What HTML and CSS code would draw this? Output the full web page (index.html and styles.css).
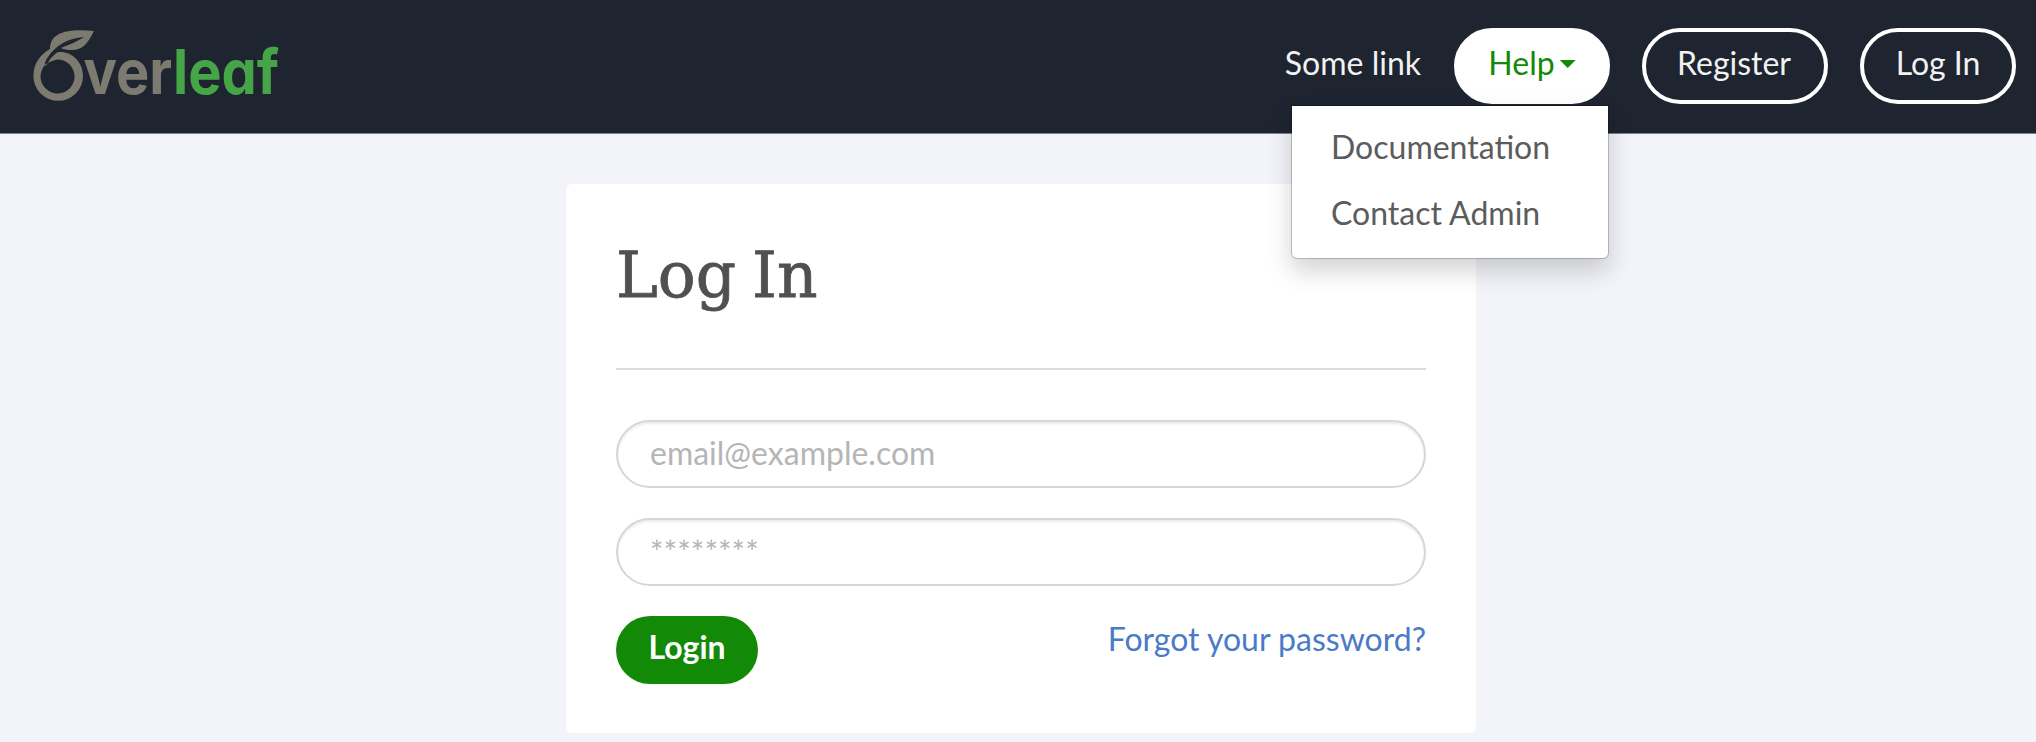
FILE: index.html
```html
<!DOCTYPE html>
<html lang="en">
<head>
<meta charset="utf-8">
<title>Overleaf - Log In</title>
<link rel="stylesheet" href="styles.css">
</head>
<body>
<header class="navbar">
  <a class="brand" aria-label="Overleaf">
    <svg class="logo" width="256" height="88" viewBox="30 26 256 88">
      <path fill="#7d7b70" d="M50 49C50 34 64 28 94 31C88 43 83 50 72 50Q65 50 61 48C69 45 78 41 84 37C68 38 55 46 48 57Q43 64 46 66Q51 56 58 52C72 51 83 62 83 76A24.8 24.8 0 1 1 33.4 76C33.4 63 41 54 50 49ZM58.2 59.5Q54 59.5 46 64A17 17 0 1 0 58.2 59.5Z" fill-rule="evenodd"/>
      <text class="wordmark" x="83.5" y="93.5" fill="#7d7b70" textLength="195.5" lengthAdjust="spacingAndGlyphs">ver<tspan fill="#46a546">leaf</tspan></text>
    </svg>
  </a>
  <nav class="nav">
    <a class="link">Some link</a>
    <div class="dropdown">
      <a class="pill pill-open">Help<span class="caret"></span></a>
      <div class="menu">
        <a class="item">Documentation</a>
        <a class="item">Contact Admin</a>
      </div>
    </div>
    <a class="pill pill-register">Register</a>
    <a class="pill">Log In</a>
  </nav>
</header>
<main class="card">
  <h1 class="title">Log In</h1>
  <form class="form">
    <input class="field" type="email" placeholder="email@example.com">
    <input class="field field-password" type="password" placeholder="********">
    <div class="actions">
      <button class="submit" type="button">Login</button>
      <a class="forgot">Forgot your password?</a>
    </div>
  </form>
</main>
</body>
</html>
```
FILE: styles.css
```css
* { box-sizing: border-box; }
body {
  margin: 0;
  height: 742px;
  overflow: hidden;
  background: #f3f4f9;
  color: #5c5c5c;
  font: 32px/50px Lato, sans-serif;
}
.navbar {
  display: flex;
  justify-content: space-between;
  height: 134px;
  padding: 26px 20px 0 30px;
  background: #1e2430;
  border-bottom: 1px solid #7c8088;
}
.logo { display: block; }
.wordmark {
  font: 700 62px Inter, sans-serif;
  font-feature-settings: "cv11";
}
.nav {
  display: flex;
  align-items: flex-start;
  gap: 32px;
  padding-top: 2px;
}
.link {
  padding: 10px 1px 0 0;
  color: #f2f2f2;
}
.pill {
  display: flex;
  justify-content: center;
  width: 156px;
  height: 76px;
  padding-top: 6px;
  border: 4px solid #fff;
  border-radius: 38px;
  color: #f2f2f2;
}
.pill-register {
  width: 186px;
  padding-right: 2px;
}
.pill-open {
  background: #fff;
  color: #138a07;
}
.caret {
  margin: 22px 0 0 5px;
  width: 16px;
  height: 8px;
  background: #138a07;
  clip-path: polygon(0 0, 100% 0, 50% 100%);
}
.dropdown { position: relative; }
.menu {
  position: absolute;
  z-index: 2;
  top: 77px;
  right: 1px;
  width: 318px;
  height: 154px;
  padding: 8px 39px 0;
  background: #fff;
  background-clip: padding-box;
  border: 1px solid rgba(0, 0, 0, .2);
  border-radius: 0 0 6px 6px;
  box-shadow: 0 12px 24px rgba(0, 0, 0, .175);
}
.item {
  display: block;
  height: 66px;
  line-height: 66px;
}
.card {
  width: 910px;
  height: 549px;
  margin: 50px 0 0 566px;
  padding: 50px;
  background: #fff;
  border-radius: 6px;
}
.title {
  height: 136px;
  margin: 0 0 50px;
  border-bottom: 2px solid #dbdbdb;
  color: #505050;
  font: 400 63px/84px "DejaVu Serif", serif;
  word-spacing: -4px;
  -webkit-text-stroke: 0.8px #505050;
}
.form {
  display: flex;
  flex-direction: column;
  gap: 30px;
}
.field {
  height: 68px;
  padding: 0 32px 3px;
  border: 2px solid #d6d6d6;
  border-radius: 34px;
  box-shadow: inset 0 2px 2px rgba(0, 0, 0, .075);
  font: 32px Lato, sans-serif;
}
.field-password { padding-bottom: 1px; }
.field::placeholder { color: #b5b5b5; }
.actions {
  display: flex;
  justify-content: space-between;
}
.submit {
  width: 142px;
  height: 68px;
  padding: 0 0 7px;
  border: 0;
  border-radius: 34px;
  background: #138a07;
  color: #fff;
  font: 700 32px Lato, sans-serif;
}
.forgot {
  line-height: 46px;
  color: #4a7bc8;
}
```
